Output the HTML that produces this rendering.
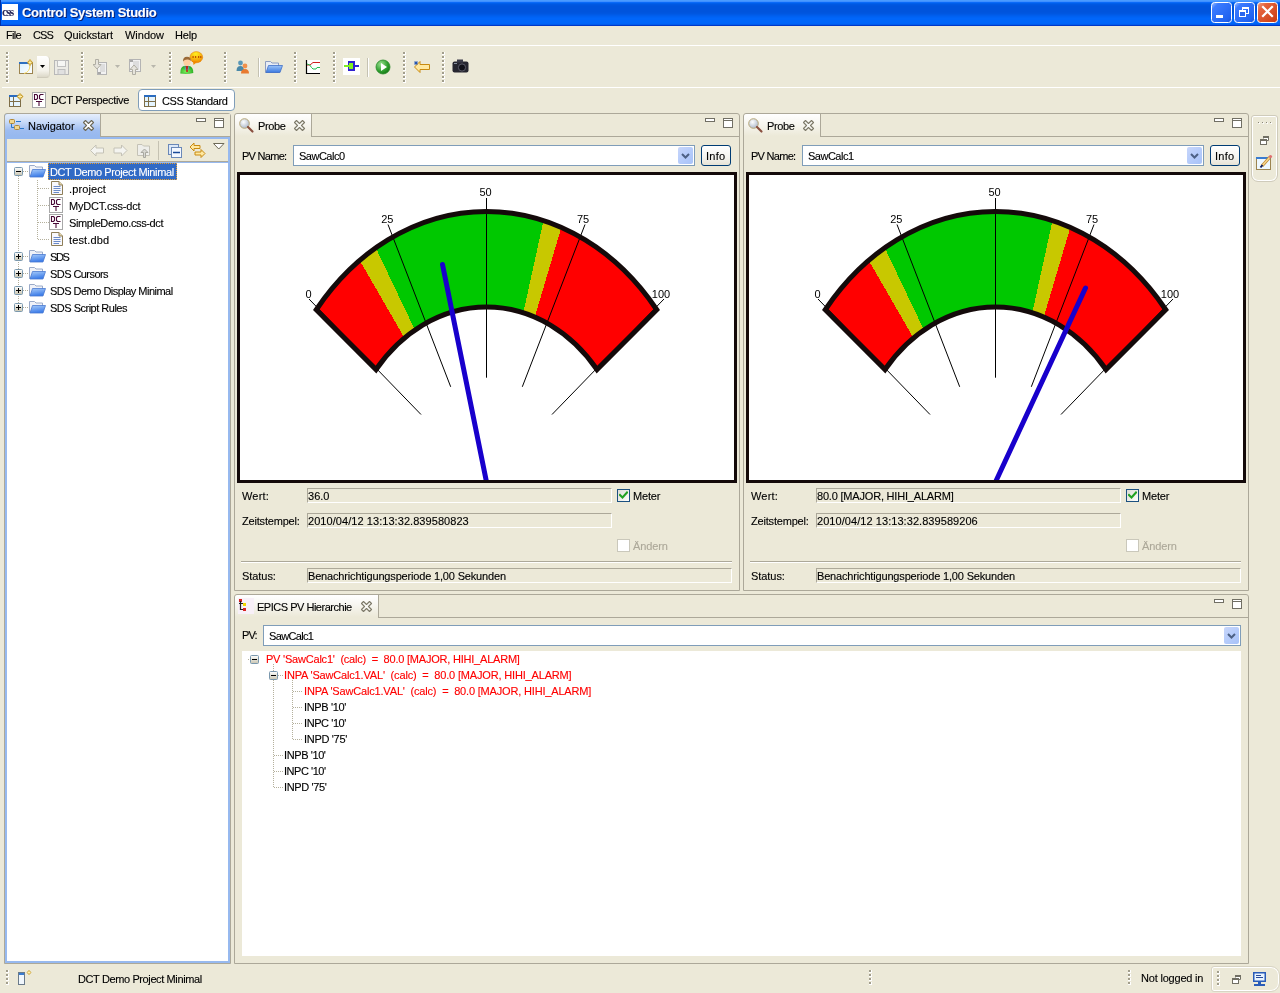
<!DOCTYPE html>
<html><head><meta charset="utf-8"><style>*{box-sizing:border-box;margin:0;padding:0}
html,body{width:1280px;height:993px;overflow:hidden;background:#ECE9D8;font-family:"Liberation Sans",sans-serif;font-size:11px;color:#000}
.a{position:absolute;display:block}
.t{position:absolute;white-space:pre;-webkit-text-stroke:0.12px currentColor}
</style></head><body><div id="root" style="position:absolute;left:0;top:0;width:1280px;height:993px;will-change:transform">
<div class="a" style="left:0px;top:0px;width:1280px;height:26px;background:linear-gradient(#4A9BFF 0px,#4A9BFF 1px,#3F90FF 1px,#3F90FF 2px,#0A6AF8 2px,#0A6AF8 3px,#005FEA 3px,#005FEA 4px,#0058E2 4px,#0058E2 5px,#0056DE 5px,#0056DE 6px,#0054DC 6px,#0054DC 7px,#0054DC 7px,#0054DC 8px,#0054DC 8px,#0054DC 9px,#0054DC 9px,#0054DC 10px,#0054DC 10px,#0054DC 11px,#0054DC 11px,#0054DC 12px,#0055DE 12px,#0055DE 13px,#0057E0 13px,#0057E0 14px,#005AE6 14px,#005AE6 15px,#005EEC 15px,#005EEC 16px,#0061F2 16px,#0061F2 17px,#0064F6 17px,#0064F6 18px,#0066FA 18px,#0066FA 19px,#0066FA 19px,#0066FA 20px,#0066FA 20px,#0066FA 21px,#0066FA 21px,#0066FA 22px,#0066FA 22px,#0066FA 23px,#0064F8 23px,#0064F8 24px,#005CEC 24px,#005CEC 25px,#0038C8 25px,#0038C8 26px)"></div>
<div class="a" style="left:0px;top:0px;width:1px;height:26px;background:#0031A8"></div>
<div class="a" style="left:2px;top:4px;width:16px;height:16px;background:#fff"></div>
<div class="t" style="left:2px;top:5px;font:bold 12px/14px 'Liberation Serif';color:#2a2a5a;letter-spacing:-1.2px;-webkit-text-stroke:0">css</div>
<div class="t" style="left:23px;top:7px;font-size:13px;line-height:13px;color:#0A1E6E;font-weight:bold;letter-spacing:-0.267px">Control System Studio</div>
<div class="t" style="left:22px;top:6px;font-size:13px;line-height:13px;color:#fff;font-weight:bold;letter-spacing:-0.267px">Control System Studio</div>
<svg class="a" style="left:1211px;top:2px;" width="21" height="21" viewBox="0 0 21 21"><defs><linearGradient id="gbmin" x1="0" y1="0" x2="1" y2="1"><stop offset="0" stop-color="#A9C5FF"/><stop offset="0.2" stop-color="#3B7BFF"/><stop offset="0.8" stop-color="#2163F0"/><stop offset="1" stop-color="#1A52D8"/></linearGradient></defs><rect x="0.5" y="0.5" width="20" height="20" rx="3" ry="3" fill="url(#gbmin)" stroke="#fff" stroke-width="1"/><rect x="5" y="13" width="7" height="3" fill="#fff"/></svg>
<svg class="a" style="left:1234px;top:2px;" width="21" height="21" viewBox="0 0 21 21"><defs><linearGradient id="gbmax" x1="0" y1="0" x2="1" y2="1"><stop offset="0" stop-color="#A9C5FF"/><stop offset="0.2" stop-color="#3B7BFF"/><stop offset="0.8" stop-color="#2163F0"/><stop offset="1" stop-color="#1A52D8"/></linearGradient></defs><rect x="0.5" y="0.5" width="20" height="20" rx="3" ry="3" fill="url(#gbmax)" stroke="#fff" stroke-width="1"/><rect x="8.5" y="5.5" width="6" height="6" fill="none" stroke="#fff" stroke-width="1"/><rect x="8" y="5" width="7" height="2" fill="#fff"/><rect x="5.5" y="8.5" width="6" height="6" fill="#2A66EE" stroke="#fff" stroke-width="1"/><rect x="5" y="8" width="7" height="2" fill="#fff"/></svg>
<svg class="a" style="left:1257px;top:2px;" width="21" height="21" viewBox="0 0 21 21"><defs><linearGradient id="gc" x1="0" y1="0" x2="1" y2="1"><stop offset="0" stop-color="#F2A48A"/><stop offset="0.25" stop-color="#E5643C"/><stop offset="1" stop-color="#C93A10"/></linearGradient></defs><rect x="0.5" y="0.5" width="20" height="20" rx="3" ry="3" fill="url(#gc)" stroke="#fff" stroke-width="1"/><path d="M6,5 L15,14 M15,5 L6,14" stroke="#fff" stroke-width="2.2" stroke-linecap="square"/></svg>
<div class="t" style="left:6px;top:30px;font-size:11px;line-height:11px;letter-spacing:-0.680px">File</div>
<div class="t" style="left:33px;top:30px;font-size:11px;line-height:11px;letter-spacing:-0.875px">CSS</div>
<div class="t" style="left:64px;top:30px;font-size:11px;line-height:11px;letter-spacing:-0.053px">Quickstart</div>
<div class="t" style="left:125px;top:30px;font-size:11px;line-height:11px;letter-spacing:-0.021px">Window</div>
<div class="t" style="left:175px;top:30px;font-size:11px;line-height:11px;letter-spacing:-0.156px">Help</div>
<div class="a" style="left:0px;top:45px;width:1280px;height:1px;background:#fff"></div>
<div class="a" style="left:2px;top:87px;width:1278px;height:1px;background:#fff"></div>
<svg class="a" style="left:6px;top:52px;" width="3" height="32" viewBox="0 0 3 32"><rect x="0" y="0" width="2" height="2" fill="#A29E8C"/><rect x="2" y="0" width="1" height="3" fill="#fff"/><rect x="0" y="2" width="3" height="1" fill="#fff"/><rect x="0" y="4" width="2" height="2" fill="#A29E8C"/><rect x="2" y="4" width="1" height="3" fill="#fff"/><rect x="0" y="6" width="3" height="1" fill="#fff"/><rect x="0" y="8" width="2" height="2" fill="#A29E8C"/><rect x="2" y="8" width="1" height="3" fill="#fff"/><rect x="0" y="10" width="3" height="1" fill="#fff"/><rect x="0" y="12" width="2" height="2" fill="#A29E8C"/><rect x="2" y="12" width="1" height="3" fill="#fff"/><rect x="0" y="14" width="3" height="1" fill="#fff"/><rect x="0" y="16" width="2" height="2" fill="#A29E8C"/><rect x="2" y="16" width="1" height="3" fill="#fff"/><rect x="0" y="18" width="3" height="1" fill="#fff"/><rect x="0" y="20" width="2" height="2" fill="#A29E8C"/><rect x="2" y="20" width="1" height="3" fill="#fff"/><rect x="0" y="22" width="3" height="1" fill="#fff"/><rect x="0" y="24" width="2" height="2" fill="#A29E8C"/><rect x="2" y="24" width="1" height="3" fill="#fff"/><rect x="0" y="26" width="3" height="1" fill="#fff"/><rect x="0" y="28" width="2" height="2" fill="#A29E8C"/><rect x="2" y="28" width="1" height="3" fill="#fff"/><rect x="0" y="30" width="3" height="1" fill="#fff"/></svg>
<svg class="a" style="left:81px;top:52px;" width="3" height="32" viewBox="0 0 3 32"><rect x="0" y="0" width="2" height="2" fill="#A29E8C"/><rect x="2" y="0" width="1" height="3" fill="#fff"/><rect x="0" y="2" width="3" height="1" fill="#fff"/><rect x="0" y="4" width="2" height="2" fill="#A29E8C"/><rect x="2" y="4" width="1" height="3" fill="#fff"/><rect x="0" y="6" width="3" height="1" fill="#fff"/><rect x="0" y="8" width="2" height="2" fill="#A29E8C"/><rect x="2" y="8" width="1" height="3" fill="#fff"/><rect x="0" y="10" width="3" height="1" fill="#fff"/><rect x="0" y="12" width="2" height="2" fill="#A29E8C"/><rect x="2" y="12" width="1" height="3" fill="#fff"/><rect x="0" y="14" width="3" height="1" fill="#fff"/><rect x="0" y="16" width="2" height="2" fill="#A29E8C"/><rect x="2" y="16" width="1" height="3" fill="#fff"/><rect x="0" y="18" width="3" height="1" fill="#fff"/><rect x="0" y="20" width="2" height="2" fill="#A29E8C"/><rect x="2" y="20" width="1" height="3" fill="#fff"/><rect x="0" y="22" width="3" height="1" fill="#fff"/><rect x="0" y="24" width="2" height="2" fill="#A29E8C"/><rect x="2" y="24" width="1" height="3" fill="#fff"/><rect x="0" y="26" width="3" height="1" fill="#fff"/><rect x="0" y="28" width="2" height="2" fill="#A29E8C"/><rect x="2" y="28" width="1" height="3" fill="#fff"/><rect x="0" y="30" width="3" height="1" fill="#fff"/></svg>
<svg class="a" style="left:169px;top:52px;" width="3" height="32" viewBox="0 0 3 32"><rect x="0" y="0" width="2" height="2" fill="#A29E8C"/><rect x="2" y="0" width="1" height="3" fill="#fff"/><rect x="0" y="2" width="3" height="1" fill="#fff"/><rect x="0" y="4" width="2" height="2" fill="#A29E8C"/><rect x="2" y="4" width="1" height="3" fill="#fff"/><rect x="0" y="6" width="3" height="1" fill="#fff"/><rect x="0" y="8" width="2" height="2" fill="#A29E8C"/><rect x="2" y="8" width="1" height="3" fill="#fff"/><rect x="0" y="10" width="3" height="1" fill="#fff"/><rect x="0" y="12" width="2" height="2" fill="#A29E8C"/><rect x="2" y="12" width="1" height="3" fill="#fff"/><rect x="0" y="14" width="3" height="1" fill="#fff"/><rect x="0" y="16" width="2" height="2" fill="#A29E8C"/><rect x="2" y="16" width="1" height="3" fill="#fff"/><rect x="0" y="18" width="3" height="1" fill="#fff"/><rect x="0" y="20" width="2" height="2" fill="#A29E8C"/><rect x="2" y="20" width="1" height="3" fill="#fff"/><rect x="0" y="22" width="3" height="1" fill="#fff"/><rect x="0" y="24" width="2" height="2" fill="#A29E8C"/><rect x="2" y="24" width="1" height="3" fill="#fff"/><rect x="0" y="26" width="3" height="1" fill="#fff"/><rect x="0" y="28" width="2" height="2" fill="#A29E8C"/><rect x="2" y="28" width="1" height="3" fill="#fff"/><rect x="0" y="30" width="3" height="1" fill="#fff"/></svg>
<svg class="a" style="left:224px;top:52px;" width="3" height="32" viewBox="0 0 3 32"><rect x="0" y="0" width="2" height="2" fill="#A29E8C"/><rect x="2" y="0" width="1" height="3" fill="#fff"/><rect x="0" y="2" width="3" height="1" fill="#fff"/><rect x="0" y="4" width="2" height="2" fill="#A29E8C"/><rect x="2" y="4" width="1" height="3" fill="#fff"/><rect x="0" y="6" width="3" height="1" fill="#fff"/><rect x="0" y="8" width="2" height="2" fill="#A29E8C"/><rect x="2" y="8" width="1" height="3" fill="#fff"/><rect x="0" y="10" width="3" height="1" fill="#fff"/><rect x="0" y="12" width="2" height="2" fill="#A29E8C"/><rect x="2" y="12" width="1" height="3" fill="#fff"/><rect x="0" y="14" width="3" height="1" fill="#fff"/><rect x="0" y="16" width="2" height="2" fill="#A29E8C"/><rect x="2" y="16" width="1" height="3" fill="#fff"/><rect x="0" y="18" width="3" height="1" fill="#fff"/><rect x="0" y="20" width="2" height="2" fill="#A29E8C"/><rect x="2" y="20" width="1" height="3" fill="#fff"/><rect x="0" y="22" width="3" height="1" fill="#fff"/><rect x="0" y="24" width="2" height="2" fill="#A29E8C"/><rect x="2" y="24" width="1" height="3" fill="#fff"/><rect x="0" y="26" width="3" height="1" fill="#fff"/><rect x="0" y="28" width="2" height="2" fill="#A29E8C"/><rect x="2" y="28" width="1" height="3" fill="#fff"/><rect x="0" y="30" width="3" height="1" fill="#fff"/></svg>
<svg class="a" style="left:294px;top:52px;" width="3" height="32" viewBox="0 0 3 32"><rect x="0" y="0" width="2" height="2" fill="#A29E8C"/><rect x="2" y="0" width="1" height="3" fill="#fff"/><rect x="0" y="2" width="3" height="1" fill="#fff"/><rect x="0" y="4" width="2" height="2" fill="#A29E8C"/><rect x="2" y="4" width="1" height="3" fill="#fff"/><rect x="0" y="6" width="3" height="1" fill="#fff"/><rect x="0" y="8" width="2" height="2" fill="#A29E8C"/><rect x="2" y="8" width="1" height="3" fill="#fff"/><rect x="0" y="10" width="3" height="1" fill="#fff"/><rect x="0" y="12" width="2" height="2" fill="#A29E8C"/><rect x="2" y="12" width="1" height="3" fill="#fff"/><rect x="0" y="14" width="3" height="1" fill="#fff"/><rect x="0" y="16" width="2" height="2" fill="#A29E8C"/><rect x="2" y="16" width="1" height="3" fill="#fff"/><rect x="0" y="18" width="3" height="1" fill="#fff"/><rect x="0" y="20" width="2" height="2" fill="#A29E8C"/><rect x="2" y="20" width="1" height="3" fill="#fff"/><rect x="0" y="22" width="3" height="1" fill="#fff"/><rect x="0" y="24" width="2" height="2" fill="#A29E8C"/><rect x="2" y="24" width="1" height="3" fill="#fff"/><rect x="0" y="26" width="3" height="1" fill="#fff"/><rect x="0" y="28" width="2" height="2" fill="#A29E8C"/><rect x="2" y="28" width="1" height="3" fill="#fff"/><rect x="0" y="30" width="3" height="1" fill="#fff"/></svg>
<svg class="a" style="left:333px;top:52px;" width="3" height="32" viewBox="0 0 3 32"><rect x="0" y="0" width="2" height="2" fill="#A29E8C"/><rect x="2" y="0" width="1" height="3" fill="#fff"/><rect x="0" y="2" width="3" height="1" fill="#fff"/><rect x="0" y="4" width="2" height="2" fill="#A29E8C"/><rect x="2" y="4" width="1" height="3" fill="#fff"/><rect x="0" y="6" width="3" height="1" fill="#fff"/><rect x="0" y="8" width="2" height="2" fill="#A29E8C"/><rect x="2" y="8" width="1" height="3" fill="#fff"/><rect x="0" y="10" width="3" height="1" fill="#fff"/><rect x="0" y="12" width="2" height="2" fill="#A29E8C"/><rect x="2" y="12" width="1" height="3" fill="#fff"/><rect x="0" y="14" width="3" height="1" fill="#fff"/><rect x="0" y="16" width="2" height="2" fill="#A29E8C"/><rect x="2" y="16" width="1" height="3" fill="#fff"/><rect x="0" y="18" width="3" height="1" fill="#fff"/><rect x="0" y="20" width="2" height="2" fill="#A29E8C"/><rect x="2" y="20" width="1" height="3" fill="#fff"/><rect x="0" y="22" width="3" height="1" fill="#fff"/><rect x="0" y="24" width="2" height="2" fill="#A29E8C"/><rect x="2" y="24" width="1" height="3" fill="#fff"/><rect x="0" y="26" width="3" height="1" fill="#fff"/><rect x="0" y="28" width="2" height="2" fill="#A29E8C"/><rect x="2" y="28" width="1" height="3" fill="#fff"/><rect x="0" y="30" width="3" height="1" fill="#fff"/></svg>
<svg class="a" style="left:403px;top:52px;" width="3" height="32" viewBox="0 0 3 32"><rect x="0" y="0" width="2" height="2" fill="#A29E8C"/><rect x="2" y="0" width="1" height="3" fill="#fff"/><rect x="0" y="2" width="3" height="1" fill="#fff"/><rect x="0" y="4" width="2" height="2" fill="#A29E8C"/><rect x="2" y="4" width="1" height="3" fill="#fff"/><rect x="0" y="6" width="3" height="1" fill="#fff"/><rect x="0" y="8" width="2" height="2" fill="#A29E8C"/><rect x="2" y="8" width="1" height="3" fill="#fff"/><rect x="0" y="10" width="3" height="1" fill="#fff"/><rect x="0" y="12" width="2" height="2" fill="#A29E8C"/><rect x="2" y="12" width="1" height="3" fill="#fff"/><rect x="0" y="14" width="3" height="1" fill="#fff"/><rect x="0" y="16" width="2" height="2" fill="#A29E8C"/><rect x="2" y="16" width="1" height="3" fill="#fff"/><rect x="0" y="18" width="3" height="1" fill="#fff"/><rect x="0" y="20" width="2" height="2" fill="#A29E8C"/><rect x="2" y="20" width="1" height="3" fill="#fff"/><rect x="0" y="22" width="3" height="1" fill="#fff"/><rect x="0" y="24" width="2" height="2" fill="#A29E8C"/><rect x="2" y="24" width="1" height="3" fill="#fff"/><rect x="0" y="26" width="3" height="1" fill="#fff"/><rect x="0" y="28" width="2" height="2" fill="#A29E8C"/><rect x="2" y="28" width="1" height="3" fill="#fff"/><rect x="0" y="30" width="3" height="1" fill="#fff"/></svg>
<svg class="a" style="left:442px;top:52px;" width="3" height="32" viewBox="0 0 3 32"><rect x="0" y="0" width="2" height="2" fill="#A29E8C"/><rect x="2" y="0" width="1" height="3" fill="#fff"/><rect x="0" y="2" width="3" height="1" fill="#fff"/><rect x="0" y="4" width="2" height="2" fill="#A29E8C"/><rect x="2" y="4" width="1" height="3" fill="#fff"/><rect x="0" y="6" width="3" height="1" fill="#fff"/><rect x="0" y="8" width="2" height="2" fill="#A29E8C"/><rect x="2" y="8" width="1" height="3" fill="#fff"/><rect x="0" y="10" width="3" height="1" fill="#fff"/><rect x="0" y="12" width="2" height="2" fill="#A29E8C"/><rect x="2" y="12" width="1" height="3" fill="#fff"/><rect x="0" y="14" width="3" height="1" fill="#fff"/><rect x="0" y="16" width="2" height="2" fill="#A29E8C"/><rect x="2" y="16" width="1" height="3" fill="#fff"/><rect x="0" y="18" width="3" height="1" fill="#fff"/><rect x="0" y="20" width="2" height="2" fill="#A29E8C"/><rect x="2" y="20" width="1" height="3" fill="#fff"/><rect x="0" y="22" width="3" height="1" fill="#fff"/><rect x="0" y="24" width="2" height="2" fill="#A29E8C"/><rect x="2" y="24" width="1" height="3" fill="#fff"/><rect x="0" y="26" width="3" height="1" fill="#fff"/><rect x="0" y="28" width="2" height="2" fill="#A29E8C"/><rect x="2" y="28" width="1" height="3" fill="#fff"/><rect x="0" y="30" width="3" height="1" fill="#fff"/></svg>
<div class="a" style="left:258px;top:58px;width:1px;height:19px;background:#C5C2B2"></div>
<div class="a" style="left:259px;top:58px;width:1px;height:19px;background:#fff"></div>
<div class="a" style="left:367px;top:58px;width:1px;height:19px;background:#C5C2B2"></div>
<div class="a" style="left:368px;top:58px;width:1px;height:19px;background:#fff"></div>
<svg class="a" style="left:19px;top:59px;" width="16" height="16" viewBox="0 0 16 16"><defs><linearGradient id="nw" x1="0" y1="0" x2="1" y2="1"><stop offset="0" stop-color="#D8F0FF"/><stop offset="1" stop-color="#FFFFFF"/></linearGradient></defs><rect x="0.5" y="3.5" width="13" height="11" fill="url(#nw)" stroke="#9C8450"/><rect x="0" y="3" width="10" height="2" fill="#2C6FC0"/><path d="M5,14.5 Q11,13 11,6" stroke="#F8D860" stroke-width="1" fill="none"/><path d="M11,0 L14,3.5 L11,7 L8,3.5 Z" fill="#C9A030"/><path d="M11,1.5 V5.5 M9.5,3.5 H12.5" stroke="#FFF0B0" stroke-width="1"/></svg>
<div class="a" style="left:37px;top:56px;width:13px;height:22px;border-radius:0 4px 4px 0;background:linear-gradient(#FFFFFF,#F4F2EA 70%,#DCD8C8);border-right:1px solid #D9D6C6;border-bottom:1px solid #CFCBBB"></div>
<svg class="a" style="left:40px;top:65px;" width="6" height="4" viewBox="0 0 6 4"><path d="M0,0 H5 L2.5,3 Z" fill="#000"/></svg>
<svg class="a" style="left:54px;top:60px;" width="16" height="16" viewBox="0 0 16 16"><rect x="0.5" y="0.5" width="14" height="14" fill="#ECEBE6" stroke="#B8B8B8"/><rect x="3.5" y="0.5" width="8" height="6" fill="#F6F6F4" stroke="#C0C0C0"/><rect x="4" y="9.5" width="7" height="5" fill="#E0E0E0" stroke="#BDBDBD"/></svg>
<svg class="a" style="left:93px;top:59px;" width="16" height="17" viewBox="0 0 16 17"><rect x="4.5" y="3.5" width="9" height="12" fill="#F2F2F2" stroke="#B4B4B4"/><path d="M7,6 H12 M7,8 H12 M7,10 H12 M7,12 H12" stroke="#C8C8C8"/><rect x="5" y="13" width="3" height="2" fill="#A8A8A8"/><path d="M2.5,0.5 H5.5 V5.5 H8 L4,10 L0,5.5 H2.5 Z" fill="#E6E4DC" stroke="#B0AEA4"/></svg>
<svg class="a" style="left:115px;top:65px;" width="6" height="4" viewBox="0 0 6 4"><path d="M0,0 H5 L2.5,3 Z" fill="#B8B6AC"/></svg>
<svg class="a" style="left:128px;top:58px;" width="16" height="18" viewBox="0 0 16 18"><rect x="1.5" y="1.5" width="11" height="12" fill="#F2F2F2" stroke="#B4B4B4"/><path d="M5,4 H11 M5,6 H11 M5,8 H11 M8,10 H11" stroke="#C8C8C8"/><rect x="2" y="2" width="3" height="2" fill="#A8A8A8"/><path d="M4.5,16.5 H7.5 V11.5 H10 L6,7 L2,11.5 H4.5 Z" fill="#E6E4DC" stroke="#B0AEA4"/></svg>
<svg class="a" style="left:151px;top:65px;" width="6" height="4" viewBox="0 0 6 4"><path d="M0,0 H5 L2.5,3 Z" fill="#B8B6AC"/></svg>
<svg class="a" style="left:180px;top:51px;" width="24" height="24" viewBox="0 0 24 24"><defs><radialGradient id="pb" cx="0.45" cy="0.2" r="0.8"><stop offset="0" stop-color="#FFF020"/><stop offset="1" stop-color="#F08A00"/></radialGradient><radialGradient id="sh" cx="0.45" cy="0.7" r="0.7"><stop offset="0" stop-color="#80F060"/><stop offset="1" stop-color="#18A018"/></radialGradient></defs><ellipse cx="16.3" cy="6.2" rx="6.4" ry="5.6" fill="url(#pb)" stroke="#E07800" stroke-width="0.5"/><path d="M13,10 L13.5,14 L17.5,10.5 Z" fill="#F08A00"/><path d="M12.5,5 h1.2 v2 h-1.2z M15,5 h1.2 v2 h-1.2z M18,5 h1.2 v2 h-1.2z M20.2,5 h1.2 v2 h-1.2z" fill="#C05000"/><path d="M0.3,22.5 Q0,15.5 5,14.8 H8.5 Q13.5,15.5 13.3,22 Q7,23.5 0.3,22.5 Z" fill="url(#sh)"/><path d="M5.8,15 L6.3,21 L7.8,21 L8,15 Z" fill="#C02020"/><path d="M4.8,15 L5.8,19 M9,15 L8,19" stroke="#7090D0" stroke-width="0.8"/><ellipse cx="7" cy="10.8" rx="3.6" ry="4.2" fill="#FFCFA0"/><path d="M3,10.5 Q2.8,5.8 7,5.8 Q11,5.8 10.8,10 Q9.5,8 7,8.5 Q4.5,8.5 3,10.5 Z" fill="#9A6A38"/></svg>
<svg class="a" style="left:236px;top:60px;" width="14" height="14" viewBox="0 0 14 14"><circle cx="4.5" cy="3" r="2.4" fill="#5A98B8"/><path d="M0.5,11 Q0.5,6 4.5,6 Q8,6 8,11 Z" fill="#4A88A8"/><circle cx="9" cy="6" r="2.4" fill="#F0904A"/><path d="M5,13.5 Q5,9 9,9 Q13,9 13,13.5 Z" fill="#E87A30"/></svg>
<svg class="a" style="left:265px;top:59px;" width="18" height="15" viewBox="0 0 18 15"><defs><linearGradient id="fo" x1="0" y1="0" x2="0" y2="1"><stop offset="0" stop-color="#9CC4F8"/><stop offset="1" stop-color="#3A78E0"/></linearGradient></defs><path d="M0.5,13.5 V2.5 H5.5 L7,4 H13.5 V13.5 Z" fill="#E8ECF4" stroke="#8C9CC0"/><path d="M1,13.5 L3.5,6.5 H17.5 L15,13.5 Z" fill="url(#fo)" stroke="#4070C8" stroke-width="0.8"/></svg>
<svg class="a" style="left:305px;top:59px;" width="16" height="16" viewBox="0 0 16 16"><rect x="1" y="1" width="14" height="13" fill="#fff"/><path d="M1.5,1 V14.5 H15" stroke="#000" stroke-width="1.2" fill="none"/><path d="M2,6 H5 L8,3.5 H15" stroke="#D02020" fill="none"/><path d="M2,5 Q5,5 6.5,8.5 L8,10 H11 L12,8.5 H15" stroke="#20C050" fill="none"/></svg>
<svg class="a" style="left:343px;top:58px;" width="17" height="17" viewBox="0 0 17 17"><rect x="0" y="0" width="17" height="17" fill="#fff"/><rect x="5" y="3" width="7" height="10" fill="#3020D0"/><rect x="6" y="5" width="4" height="6" fill="#80F020"/><rect x="1" y="7" width="6" height="2" fill="#80F020"/><rect x="12" y="7" width="4" height="2" fill="#3020D0"/></svg>
<svg class="a" style="left:375px;top:59px;" width="16" height="16" viewBox="0 0 16 16"><defs><radialGradient id="pl" cx="0.35" cy="0.3" r="0.8"><stop offset="0" stop-color="#9AE090"/><stop offset="0.6" stop-color="#30A030"/><stop offset="1" stop-color="#107010"/></radialGradient></defs><circle cx="8" cy="8" r="7" fill="url(#pl)" stroke="#2A8A2A" stroke-width="0.8"/><path d="M6,4 L12,8 L6,12 Z" fill="#fff"/></svg>
<svg class="a" style="left:413px;top:59px;" width="18" height="15" viewBox="0 0 18 15"><path d="M1.5,8 L7,2.5 V5.5 H16.5 V10.5 H7 V13.5 Z" fill="#FFE8A0" stroke="#C88A10" stroke-width="1"/><path d="M3,2 L3,6 M1,4 H5 M1.6,2.6 L4.4,5.4 M4.4,2.6 L1.6,5.4" stroke="#2050B0" stroke-width="0.9"/></svg>
<svg class="a" style="left:452px;top:59px;" width="18" height="15" viewBox="0 0 18 15"><rect x="0.5" y="2.5" width="16" height="11" rx="2" fill="#262630"/><rect x="5" y="0.5" width="6" height="3" fill="#3A3A48"/><circle cx="10" cy="8.5" r="3.6" fill="#101018" stroke="#6A6A78" stroke-width="0.8"/><rect x="2" y="4" width="3" height="1" fill="#8890A0"/></svg>
<svg class="a" style="left:9px;top:93px;" width="15" height="15" viewBox="0 0 15 15"><rect x="0.5" y="2.5" width="11" height="11" fill="#E4F4FF" stroke="#7E6E48"/><rect x="0" y="2" width="9" height="2" fill="#2A6CC0"/><path d="M4.5,4 V13 M1,8.5 H11" stroke="#7E6E48"/><path d="M11,0 L14.5,3.5 L11,7 L7.5,3.5 Z" fill="#C9A030"/><path d="M11,1.5 V5.5 M9,3.5 H13" stroke="#FFF0B0"/></svg>
<svg class="a" style="left:32px;top:92px;" width="14" height="16" viewBox="0 0 14 16"><rect x="0.5" y="0.5" width="13" height="15" fill="#fff" stroke="#A8A8A8"/><path d="M2.5,2.5 V7.5 H4.5 L5.5,6.5 V3.5 L4.5,2.5 Z M11.5,2.5 H8.5 L7.5,3.5 V6.5 L8.5,7.5 H11.5 M4,9.5 H10 M7,9.5 V14" stroke="#4A0A38" stroke-width="1.1" fill="none"/></svg>
<div class="t" style="left:51px;top:95px;font-size:11px;line-height:11px;letter-spacing:-0.330px">DCT Perspective</div>
<div class="a" style="left:138px;top:89px;width:97px;height:22px;border:1px solid #7F9DB9;border-radius:4px;background:#fff"></div>
<svg class="a" style="left:144px;top:95px;" width="13" height="12" viewBox="0 0 13 12"><rect x="0.5" y="0.5" width="11" height="11" fill="#E4F4FF" stroke="#7E6E48"/><rect x="0" y="0" width="12" height="2" fill="#2A6CC0"/><path d="M4.5,2 V11 M1,6.5 H11" stroke="#7E6E48"/></svg>
<div class="t" style="left:162px;top:96px;font-size:11px;line-height:11px;letter-spacing:-0.406px">CSS Standard</div>
<div class="a" style="left:4px;top:113px;width:227px;height:851px;border:1px solid #ACA899;border-radius:3px 3px 0 0;background:#97B9EF"></div>
<div class="a" style="left:5px;top:114px;width:95px;height:22px;border-radius:3px 0 0 0;background:linear-gradient(#E6EFFC 0%,#C9DBF8 35%,#9DBCF0 75%,#97B9EF 100%)"></div>
<div class="a" style="left:100px;top:114px;width:130px;height:23px;background:#ECE9D8;border-left:1px solid #ACA899;border-bottom:1px solid #ACA899"></div>
<svg class="a" style="left:9px;top:119px;" width="16" height="12" viewBox="0 0 16 12"><rect x="0.5" y="0.5" width="5" height="4" rx="1" fill="#F0D890" stroke="#B08838"/><rect x="5.5" y="6.5" width="5" height="4" rx="1" fill="#F0D890" stroke="#B08838"/><path d="M2.5,5 V8.5 H5 M7,2.5 H12 M11,9.5 H15" stroke="#2A78C8" fill="none"/></svg>
<div class="t" style="left:28px;top:121px;font-size:11px;line-height:11px;letter-spacing:-0.066px">Navigator</div>
<svg class="a" style="left:83px;top:120px;" width="12" height="12" viewBox="0 0 12 12"><path d="M0.5,2.5 L2.5,0.5 L5.5,3.5 L8.5,0.5 L10.5,2.5 L7.5,5.5 L10.5,8.5 L8.5,10.5 L5.5,7.5 L2.5,10.5 L0.5,8.5 L3.5,5.5 Z" fill="#fff" stroke="#6E6A58" stroke-width="1.1" stroke-linejoin="round"/></svg>
<div class="a" style="left:196px;top:118px;width:10px;height:4px;border:1px solid #716F64;background:#fff"></div>
<div class="a" style="left:214px;top:118px;width:10px;height:10px;border:1px solid #716F64;background:#fff"></div>
<div class="a" style="left:215px;top:120px;width:8px;height:1px;background:#716F64"></div>
<div class="a" style="left:7px;top:139px;width:221px;height:23px;background:#ECE9D8;border-bottom:1px solid #ACA899"></div>
<svg class="a" style="left:90px;top:144px;" width="15" height="13" viewBox="0 0 15 13"><path d="M0.5,6.5 L6,1 V4 H13.5 V9 H6 V12 Z" fill="#F4F4F0" stroke="#C4C2B6"/></svg>
<svg class="a" style="left:113px;top:144px;" width="15" height="13" viewBox="0 0 15 13"><path d="M14,6.5 L8.5,1 V4 H1 V9 H8.5 V12 Z" fill="#F4F4F0" stroke="#C4C2B6"/></svg>
<svg class="a" style="left:137px;top:143px;" width="14" height="16" viewBox="0 0 14 16"><path d="M0.5,12.5 V1.5 H5 L6.5,3 H12.5 V12.5 Z" fill="#EEEEEA" stroke="#C4C2B6"/><path d="M6.5,14.5 V9.5 H4 L7.5,6 L11,9.5 H8.5 V14.5 Z" fill="#D8D8D2" stroke="#A8A8A0"/></svg>
<div class="a" style="left:158px;top:141px;width:1px;height:19px;background:#C5C2B2"></div>
<svg class="a" style="left:168px;top:144px;" width="14" height="14" viewBox="0 0 14 14"><rect x="0.5" y="0.5" width="10" height="10" fill="#DCE8F8" stroke="#6A88B8"/><rect x="3.5" y="3.5" width="10" height="10" fill="#F4F8FF" stroke="#6A88B8"/><path d="M5,8.5 H12" stroke="#1A4A98" stroke-width="1.5"/></svg>
<svg class="a" style="left:189px;top:142px;" width="17" height="17" viewBox="0 0 17 17"><path d="M1,5 L5,1 V3.5 H11 V6.5 H5 V9 Z" fill="#FFE8A0" stroke="#C88A10"/><path d="M16,11.5 L12,7.5 V10 H6 V13 H12 V15.5 Z" fill="#FFE8A0" stroke="#C88A10"/></svg>
<svg class="a" style="left:213px;top:143px;" width="12" height="7" viewBox="0 0 12 7"><path d="M0.5,0.5 H11 L5.75,6 Z" fill="#fff" stroke="#6E6A58"/></svg>
<div class="a" style="left:7px;top:163px;width:221px;height:798px;background:#fff"></div>
<div class="a" style="left:18px;top:176px;width:1px;height:132px;background-image:linear-gradient(#B4B09C 1px,transparent 1px);background-size:1px 2px"></div>
<div class="a" style="left:37px;top:180px;width:1px;height:60px;background-image:linear-gradient(#B4B09C 1px,transparent 1px);background-size:1px 2px"></div>
<div class="a" style="left:38px;top:188px;width:11px;height:1px;background-image:linear-gradient(90deg,#B4B09C 1px,transparent 1px);background-size:2px 1px"></div>
<div class="a" style="left:38px;top:205px;width:11px;height:1px;background-image:linear-gradient(90deg,#B4B09C 1px,transparent 1px);background-size:2px 1px"></div>
<div class="a" style="left:38px;top:222px;width:11px;height:1px;background-image:linear-gradient(90deg,#B4B09C 1px,transparent 1px);background-size:2px 1px"></div>
<div class="a" style="left:38px;top:239px;width:11px;height:1px;background-image:linear-gradient(90deg,#B4B09C 1px,transparent 1px);background-size:2px 1px"></div>
<div class="a" style="left:23px;top:171px;width:6px;height:1px;background-image:linear-gradient(90deg,#B4B09C 1px,transparent 1px);background-size:2px 1px"></div>
<div class="a" style="left:23px;top:256px;width:6px;height:1px;background-image:linear-gradient(90deg,#B4B09C 1px,transparent 1px);background-size:2px 1px"></div>
<div class="a" style="left:23px;top:273px;width:6px;height:1px;background-image:linear-gradient(90deg,#B4B09C 1px,transparent 1px);background-size:2px 1px"></div>
<div class="a" style="left:23px;top:290px;width:6px;height:1px;background-image:linear-gradient(90deg,#B4B09C 1px,transparent 1px);background-size:2px 1px"></div>
<div class="a" style="left:23px;top:307px;width:6px;height:1px;background-image:linear-gradient(90deg,#B4B09C 1px,transparent 1px);background-size:2px 1px"></div>
<div class="a" style="left:48px;top:163px;width:129px;height:17px;background:#316AC5;outline:1px dotted #E8A030;outline-offset:-1px"></div>
<div class="t" style="left:50px;top:167px;font-size:11px;line-height:11px;color:#fff;letter-spacing:-0.389px">DCT Demo Project Minimal</div>
<svg class="a" style="left:14px;top:167px;" width="9" height="9" viewBox="0 0 9 9"><defs><linearGradient id="eb14167" x1="0" y1="0" x2="0" y2="1"><stop offset="0" stop-color="#fff"/><stop offset="1" stop-color="#C8C4B0"/></linearGradient></defs><rect x="0.5" y="0.5" width="8" height="8" rx="1" fill="url(#eb14167)" stroke="#7A98AE"/><path d="M2,4.5 H7" stroke="#000"/></svg>
<svg class="a" style="left:29px;top:164px;" width="17" height="14" viewBox="0 0 17 14"><defs><linearGradient id="fl" x1="0" y1="0" x2="0.3" y2="1"><stop offset="0" stop-color="#A8CCFA"/><stop offset="1" stop-color="#3C7CE8"/></linearGradient></defs><path d="M0.5,12.5 V1.5 H5.5 L7,3 H13.5 V12.5 Z" fill="#F0F2F8" stroke="#9AAAC8"/><path d="M1,13 L3.5,5.5 H16.5 L14,13 Z" fill="url(#fl)" stroke="#4A7AD0" stroke-width="0.8"/></svg>
<svg class="a" style="left:51px;top:181px;" width="12" height="14" viewBox="0 0 12 14"><path d="M0.5,0.5 H8 L11.5,4 V13.5 H0.5 Z" fill="#F8F8FC" stroke="#8E7E58"/><path d="M8,0.5 V4 H11.5" fill="#E8D8A8" stroke="#8E7E58"/><path d="M2.5,5.5 H9.5 M2.5,7.5 H9.5 M2.5,9.5 H9.5 M2.5,11.5 H8" stroke="#6A8AC8"/></svg>
<div class="t" style="left:69px;top:184px;font-size:11px;line-height:11px;letter-spacing:0.113px">.project</div>
<svg class="a" style="left:49px;top:197px;" width="14" height="16" viewBox="0 0 14 16"><rect x="0.5" y="0.5" width="13" height="15" fill="#fff" stroke="#A8A8A8"/><path d="M2.5,2.5 V7.5 H4.5 L5.5,6.5 V3.5 L4.5,2.5 Z M11.5,2.5 H8.5 L7.5,3.5 V6.5 L8.5,7.5 H11.5 M4,9.5 H10 M7,9.5 V14" stroke="#4A0A38" stroke-width="1.1" fill="none"/></svg>
<div class="t" style="left:69px;top:201px;font-size:11px;line-height:11px;letter-spacing:-0.203px">MyDCT.css-dct</div>
<svg class="a" style="left:49px;top:214px;" width="14" height="16" viewBox="0 0 14 16"><rect x="0.5" y="0.5" width="13" height="15" fill="#fff" stroke="#A8A8A8"/><path d="M2.5,2.5 V7.5 H4.5 L5.5,6.5 V3.5 L4.5,2.5 Z M11.5,2.5 H8.5 L7.5,3.5 V6.5 L8.5,7.5 H11.5 M4,9.5 H10 M7,9.5 V14" stroke="#4A0A38" stroke-width="1.1" fill="none"/></svg>
<div class="t" style="left:69px;top:218px;font-size:11px;line-height:11px;letter-spacing:-0.376px">SimpleDemo.css-dct</div>
<svg class="a" style="left:51px;top:232px;" width="12" height="14" viewBox="0 0 12 14"><path d="M0.5,0.5 H8 L11.5,4 V13.5 H0.5 Z" fill="#F8F8FC" stroke="#8E7E58"/><path d="M8,0.5 V4 H11.5" fill="#E8D8A8" stroke="#8E7E58"/><path d="M2.5,5.5 H9.5 M2.5,7.5 H9.5 M2.5,9.5 H9.5 M2.5,11.5 H8" stroke="#6A8AC8"/></svg>
<div class="t" style="left:69px;top:235px;font-size:11px;line-height:11px;letter-spacing:0.127px">test.dbd</div>
<svg class="a" style="left:14px;top:252px;" width="9" height="9" viewBox="0 0 9 9"><defs><linearGradient id="eb14252" x1="0" y1="0" x2="0" y2="1"><stop offset="0" stop-color="#fff"/><stop offset="1" stop-color="#C8C4B0"/></linearGradient></defs><rect x="0.5" y="0.5" width="8" height="8" rx="1" fill="url(#eb14252)" stroke="#7A98AE"/><path d="M2,4.5 H7" stroke="#000"/><path d="M4.5,2 V7" stroke="#000"/></svg>
<svg class="a" style="left:29px;top:249px;" width="17" height="14" viewBox="0 0 17 14"><defs><linearGradient id="fl" x1="0" y1="0" x2="0.3" y2="1"><stop offset="0" stop-color="#A8CCFA"/><stop offset="1" stop-color="#3C7CE8"/></linearGradient></defs><path d="M0.5,12.5 V1.5 H5.5 L7,3 H13.5 V12.5 Z" fill="#F0F2F8" stroke="#9AAAC8"/><path d="M1,13 L3.5,5.5 H16.5 L14,13 Z" fill="url(#fl)" stroke="#4A7AD0" stroke-width="0.8"/></svg>
<div class="t" style="left:50px;top:252px;font-size:11px;line-height:11px;letter-spacing:-1.442px">SDS</div>
<svg class="a" style="left:14px;top:269px;" width="9" height="9" viewBox="0 0 9 9"><defs><linearGradient id="eb14269" x1="0" y1="0" x2="0" y2="1"><stop offset="0" stop-color="#fff"/><stop offset="1" stop-color="#C8C4B0"/></linearGradient></defs><rect x="0.5" y="0.5" width="8" height="8" rx="1" fill="url(#eb14269)" stroke="#7A98AE"/><path d="M2,4.5 H7" stroke="#000"/><path d="M4.5,2 V7" stroke="#000"/></svg>
<svg class="a" style="left:29px;top:266px;" width="17" height="14" viewBox="0 0 17 14"><defs><linearGradient id="fl" x1="0" y1="0" x2="0.3" y2="1"><stop offset="0" stop-color="#A8CCFA"/><stop offset="1" stop-color="#3C7CE8"/></linearGradient></defs><path d="M0.5,12.5 V1.5 H5.5 L7,3 H13.5 V12.5 Z" fill="#F0F2F8" stroke="#9AAAC8"/><path d="M1,13 L3.5,5.5 H16.5 L14,13 Z" fill="url(#fl)" stroke="#4A7AD0" stroke-width="0.8"/></svg>
<div class="t" style="left:50px;top:269px;font-size:11px;line-height:11px;letter-spacing:-0.562px">SDS Cursors</div>
<svg class="a" style="left:14px;top:286px;" width="9" height="9" viewBox="0 0 9 9"><defs><linearGradient id="eb14286" x1="0" y1="0" x2="0" y2="1"><stop offset="0" stop-color="#fff"/><stop offset="1" stop-color="#C8C4B0"/></linearGradient></defs><rect x="0.5" y="0.5" width="8" height="8" rx="1" fill="url(#eb14286)" stroke="#7A98AE"/><path d="M2,4.5 H7" stroke="#000"/><path d="M4.5,2 V7" stroke="#000"/></svg>
<svg class="a" style="left:29px;top:283px;" width="17" height="14" viewBox="0 0 17 14"><defs><linearGradient id="fl" x1="0" y1="0" x2="0.3" y2="1"><stop offset="0" stop-color="#A8CCFA"/><stop offset="1" stop-color="#3C7CE8"/></linearGradient></defs><path d="M0.5,12.5 V1.5 H5.5 L7,3 H13.5 V12.5 Z" fill="#F0F2F8" stroke="#9AAAC8"/><path d="M1,13 L3.5,5.5 H16.5 L14,13 Z" fill="url(#fl)" stroke="#4A7AD0" stroke-width="0.8"/></svg>
<div class="t" style="left:50px;top:286px;font-size:11px;line-height:11px;letter-spacing:-0.521px">SDS Demo Display Minimal</div>
<svg class="a" style="left:14px;top:303px;" width="9" height="9" viewBox="0 0 9 9"><defs><linearGradient id="eb14303" x1="0" y1="0" x2="0" y2="1"><stop offset="0" stop-color="#fff"/><stop offset="1" stop-color="#C8C4B0"/></linearGradient></defs><rect x="0.5" y="0.5" width="8" height="8" rx="1" fill="url(#eb14303)" stroke="#7A98AE"/><path d="M2,4.5 H7" stroke="#000"/><path d="M4.5,2 V7" stroke="#000"/></svg>
<svg class="a" style="left:29px;top:300px;" width="17" height="14" viewBox="0 0 17 14"><defs><linearGradient id="fl" x1="0" y1="0" x2="0.3" y2="1"><stop offset="0" stop-color="#A8CCFA"/><stop offset="1" stop-color="#3C7CE8"/></linearGradient></defs><path d="M0.5,12.5 V1.5 H5.5 L7,3 H13.5 V12.5 Z" fill="#F0F2F8" stroke="#9AAAC8"/><path d="M1,13 L3.5,5.5 H16.5 L14,13 Z" fill="url(#fl)" stroke="#4A7AD0" stroke-width="0.8"/></svg>
<div class="t" style="left:50px;top:303px;font-size:11px;line-height:11px;letter-spacing:-0.500px">SDS Script Rules</div>
<div class="a" style="left:234px;top:113px;width:506px;height:478px;border:1px solid #ACA899;border-radius:3px 3px 0 0"></div>
<div class="a" style="left:235px;top:114px;width:76px;height:22px;border-radius:3px 0 0 0;background:linear-gradient(#FFFFFF 0%,#F8F7F2 40%,#ECE9D8 100%)"></div>
<div class="a" style="left:311px;top:114px;width:428px;height:23px;border-left:1px solid #ACA899;border-bottom:1px solid #ACA899"></div>
<svg class="a" style="left:239px;top:118px;" width="16" height="16" viewBox="0 0 16 16"><defs><radialGradient id="mg234" cx="0.4" cy="0.35" r="0.7"><stop offset="0" stop-color="#FFFFFF"/><stop offset="1" stop-color="#A8B4C8"/></radialGradient></defs><circle cx="5.5" cy="5.5" r="4.8" fill="url(#mg234)" stroke="#B8A878" stroke-width="1"/><path d="M9,9 L13.5,13.5" stroke="#8A5040" stroke-width="2.2" stroke-linecap="round"/></svg>
<div class="t" style="left:258px;top:121px;font-size:11px;line-height:11px;letter-spacing:-0.375px">Probe</div>
<svg class="a" style="left:294px;top:120px;" width="12" height="12" viewBox="0 0 12 12"><path d="M0.5,2.5 L2.5,0.5 L5.5,3.5 L8.5,0.5 L10.5,2.5 L7.5,5.5 L10.5,8.5 L8.5,10.5 L5.5,7.5 L2.5,10.5 L0.5,8.5 L3.5,5.5 Z" fill="#F8F8F4" stroke="#7E7A6A" stroke-width="1.1" stroke-linejoin="round"/></svg>
<div class="a" style="left:705px;top:118px;width:10px;height:4px;border:1px solid #716F64;background:#fff"></div>
<div class="a" style="left:723px;top:118px;width:10px;height:10px;border:1px solid #716F64;background:#fff"></div>
<div class="a" style="left:724px;top:120px;width:8px;height:1px;background:#716F64"></div>
<div class="t" style="left:242px;top:151px;font-size:11px;line-height:11px;letter-spacing:-0.720px">PV Name:</div>
<div class="a" style="left:293px;top:145px;width:402px;height:21px;border:1px solid #7F9DB9;background:#fff"></div>
<div class="t" style="left:299px;top:151px;font-size:11px;line-height:11px;letter-spacing:-0.504px">SawCalc0</div>
<div class="a" style="left:678px;top:147px;width:15px;height:17px;border-radius:2px;background:linear-gradient(135deg,#C8D6FA 0%,#B6CCFB 50%,#A8C2F8 100%)"></div>
<svg class="a" style="left:681px;top:153px;" width="9" height="6" viewBox="0 0 9 6"><path d="M1,1 L4.5,4.5 L8,1" stroke="#4D6185" stroke-width="2" fill="none"/></svg>
<div class="a" style="left:701px;top:145px;width:30px;height:21px;border:1px solid #003C74;border-radius:3px;background:linear-gradient(#FFFFFF 0%,#F4F3EE 60%,#E6E3D6 100%)"></div>
<div class="t" style="left:706px;top:151px;font-size:11px;line-height:11px;letter-spacing:0.281px">Info</div>
<svg class="a" style="left:237px;top:172px" width="500" height="311" viewBox="0 0 500 311"><rect x="0" y="0" width="500" height="311" fill="#fff"/><path d="M79.25,137.75 A220.17,268.50 0 0 1 122.75,88.46 L167.50,165.98 A143.59,173.00 0 0 0 139.01,197.51 Z" fill="#FF0000" shape-rendering="crispEdges"/><path d="M122.75,88.46 A220.17,268.50 0 0 1 138.80,75.91 L177.96,158.00 A143.59,173.00 0 0 0 167.50,165.98 Z" fill="#C8C800" shape-rendering="crispEdges"/><path d="M138.80,75.91 A220.17,268.50 0 0 1 306.52,48.66 L286.27,140.77 A143.59,173.00 0 0 0 177.96,158.00 Z" fill="#00C800" shape-rendering="crispEdges"/><path d="M306.52,48.66 A220.17,268.50 0 0 1 324.30,55.47 L297.76,145.07 A143.59,173.00 0 0 0 286.27,140.77 Z" fill="#C8C800" shape-rendering="crispEdges"/><path d="M324.30,55.47 A220.17,268.50 0 0 1 419.75,137.75 L359.99,197.51 A143.59,173.00 0 0 0 297.76,145.07 Z" fill="#FF0000" shape-rendering="crispEdges"/><line x1="72" y1="127" x2="184" y2="242.5" stroke="#000" stroke-width="1"/><line x1="151" y1="52.5" x2="213.7" y2="214.8" stroke="#000" stroke-width="1"/><line x1="249.5" y1="26" x2="249.5" y2="205.7" stroke="#000" stroke-width="1"/><line x1="348" y1="52.5" x2="285.3" y2="214.8" stroke="#000" stroke-width="1"/><line x1="427" y1="127" x2="315" y2="242.5" stroke="#000" stroke-width="1"/><path d="M79.25,137.75 A220.17,268.50 0 0 1 419.75,137.75 L359.99,197.51 A143.59,173.00 0 0 0 139.01,197.51 Z" fill="none" stroke="#140A0A" stroke-width="5" stroke-linejoin="miter"/><text x="71.6" y="126" font-family="Liberation Sans" font-size="11" text-anchor="middle" fill="#000">0</text><text x="150.3" y="51" font-family="Liberation Sans" font-size="11" text-anchor="middle" fill="#000">25</text><text x="248.5" y="24" font-family="Liberation Sans" font-size="11" text-anchor="middle" fill="#000">50</text><text x="346" y="51" font-family="Liberation Sans" font-size="11" text-anchor="middle" fill="#000">75</text><text x="424" y="126" font-family="Liberation Sans" font-size="11" text-anchor="middle" fill="#000">100</text><line x1="249.5" y1="310" x2="205.5" y2="92.5" stroke="#1800CC" stroke-width="5" stroke-linecap="round"/><rect x="1.5" y="1.5" width="497" height="308" fill="none" stroke="#140A0A" stroke-width="3"/></svg>
<div class="t" style="left:242px;top:491px;font-size:11px;line-height:11px;letter-spacing:0.164px">Wert:</div>
<div class="a" style="left:307px;top:488px;width:305px;height:15px;border-top:1px solid #ACA899;border-left:1px solid #ACA899;border-right:1px solid #fff;border-bottom:1px solid #fff;background:#ECE9D8"></div>
<div class="t" style="left:308px;top:491px;font-size:11px;line-height:11px;letter-spacing:0.016px">36.0</div>
<div class="a" style="left:617px;top:489px;width:13px;height:13px;border:1px solid #1C5180;background:linear-gradient(135deg,#DCDCD7 0%,#F0F0EA 60%,#FFFFFF 100%)"></div>
<svg class="a" style="left:619px;top:491px;" width="9" height="9" viewBox="0 0 9 9"><path d="M1,4 L3.5,6.5 L8,1.5" stroke="#21A121" stroke-width="2" fill="none" stroke-linecap="square"/></svg>
<div class="t" style="left:633px;top:491px;font-size:11px;line-height:11px;letter-spacing:-0.165px">Meter</div>
<div class="t" style="left:242px;top:516px;font-size:11px;line-height:11px;letter-spacing:-0.186px">Zeitstempel:</div>
<div class="a" style="left:307px;top:513px;width:305px;height:15px;border-top:1px solid #ACA899;border-left:1px solid #ACA899;border-right:1px solid #fff;border-bottom:1px solid #fff;background:#ECE9D8"></div>
<div class="t" style="left:308px;top:516px;font-size:11px;line-height:11px;letter-spacing:0.060px">2010/04/12 13:13:32.839580823</div>
<div class="a" style="left:617px;top:539px;width:13px;height:13px;border:1px solid #CAC8BB;background:#fff"></div>
<div class="t" style="left:633px;top:541px;font-size:11px;line-height:11px;color:#ACA899;letter-spacing:-0.117px">Ändern</div>
<div class="a" style="left:241px;top:561px;width:491px;height:1px;background:#ACA899"></div>
<div class="a" style="left:241px;top:562px;width:491px;height:1px;background:#fff"></div>
<div class="t" style="left:242px;top:571px;font-size:11px;line-height:11px;letter-spacing:-0.054px">Status:</div>
<div class="a" style="left:307px;top:568px;width:425px;height:15px;border-top:1px solid #ACA899;border-left:1px solid #ACA899;border-right:1px solid #fff;border-bottom:1px solid #fff;background:#ECE9D8"></div>
<div class="t" style="left:308px;top:571px;font-size:11px;line-height:11px;letter-spacing:-0.169px">Benachrichtigungsperiode 1,00 Sekunden</div>
<div class="a" style="left:743px;top:113px;width:506px;height:478px;border:1px solid #ACA899;border-radius:3px 3px 0 0"></div>
<div class="a" style="left:744px;top:114px;width:76px;height:22px;border-radius:3px 0 0 0;background:linear-gradient(#FFFFFF 0%,#F8F7F2 40%,#ECE9D8 100%)"></div>
<div class="a" style="left:820px;top:114px;width:428px;height:23px;border-left:1px solid #ACA899;border-bottom:1px solid #ACA899"></div>
<svg class="a" style="left:748px;top:118px;" width="16" height="16" viewBox="0 0 16 16"><defs><radialGradient id="mg743" cx="0.4" cy="0.35" r="0.7"><stop offset="0" stop-color="#FFFFFF"/><stop offset="1" stop-color="#A8B4C8"/></radialGradient></defs><circle cx="5.5" cy="5.5" r="4.8" fill="url(#mg743)" stroke="#B8A878" stroke-width="1"/><path d="M9,9 L13.5,13.5" stroke="#8A5040" stroke-width="2.2" stroke-linecap="round"/></svg>
<div class="t" style="left:767px;top:121px;font-size:11px;line-height:11px;letter-spacing:-0.375px">Probe</div>
<svg class="a" style="left:803px;top:120px;" width="12" height="12" viewBox="0 0 12 12"><path d="M0.5,2.5 L2.5,0.5 L5.5,3.5 L8.5,0.5 L10.5,2.5 L7.5,5.5 L10.5,8.5 L8.5,10.5 L5.5,7.5 L2.5,10.5 L0.5,8.5 L3.5,5.5 Z" fill="#F8F8F4" stroke="#7E7A6A" stroke-width="1.1" stroke-linejoin="round"/></svg>
<div class="a" style="left:1214px;top:118px;width:10px;height:4px;border:1px solid #716F64;background:#fff"></div>
<div class="a" style="left:1232px;top:118px;width:10px;height:10px;border:1px solid #716F64;background:#fff"></div>
<div class="a" style="left:1233px;top:120px;width:8px;height:1px;background:#716F64"></div>
<div class="t" style="left:751px;top:151px;font-size:11px;line-height:11px;letter-spacing:-0.720px">PV Name:</div>
<div class="a" style="left:802px;top:145px;width:402px;height:21px;border:1px solid #7F9DB9;background:#fff"></div>
<div class="t" style="left:808px;top:151px;font-size:11px;line-height:11px;letter-spacing:-0.504px">SawCalc1</div>
<div class="a" style="left:1187px;top:147px;width:15px;height:17px;border-radius:2px;background:linear-gradient(135deg,#C8D6FA 0%,#B6CCFB 50%,#A8C2F8 100%)"></div>
<svg class="a" style="left:1190px;top:153px;" width="9" height="6" viewBox="0 0 9 6"><path d="M1,1 L4.5,4.5 L8,1" stroke="#4D6185" stroke-width="2" fill="none"/></svg>
<div class="a" style="left:1210px;top:145px;width:30px;height:21px;border:1px solid #003C74;border-radius:3px;background:linear-gradient(#FFFFFF 0%,#F4F3EE 60%,#E6E3D6 100%)"></div>
<div class="t" style="left:1215px;top:151px;font-size:11px;line-height:11px;letter-spacing:0.281px">Info</div>
<svg class="a" style="left:746px;top:172px" width="500" height="311" viewBox="0 0 500 311"><rect x="0" y="0" width="500" height="311" fill="#fff"/><path d="M79.25,137.75 A220.17,268.50 0 0 1 122.75,88.46 L167.50,165.98 A143.59,173.00 0 0 0 139.01,197.51 Z" fill="#FF0000" shape-rendering="crispEdges"/><path d="M122.75,88.46 A220.17,268.50 0 0 1 138.80,75.91 L177.96,158.00 A143.59,173.00 0 0 0 167.50,165.98 Z" fill="#C8C800" shape-rendering="crispEdges"/><path d="M138.80,75.91 A220.17,268.50 0 0 1 306.52,48.66 L286.27,140.77 A143.59,173.00 0 0 0 177.96,158.00 Z" fill="#00C800" shape-rendering="crispEdges"/><path d="M306.52,48.66 A220.17,268.50 0 0 1 324.30,55.47 L297.76,145.07 A143.59,173.00 0 0 0 286.27,140.77 Z" fill="#C8C800" shape-rendering="crispEdges"/><path d="M324.30,55.47 A220.17,268.50 0 0 1 419.75,137.75 L359.99,197.51 A143.59,173.00 0 0 0 297.76,145.07 Z" fill="#FF0000" shape-rendering="crispEdges"/><line x1="72" y1="127" x2="184" y2="242.5" stroke="#000" stroke-width="1"/><line x1="151" y1="52.5" x2="213.7" y2="214.8" stroke="#000" stroke-width="1"/><line x1="249.5" y1="26" x2="249.5" y2="205.7" stroke="#000" stroke-width="1"/><line x1="348" y1="52.5" x2="285.3" y2="214.8" stroke="#000" stroke-width="1"/><line x1="427" y1="127" x2="315" y2="242.5" stroke="#000" stroke-width="1"/><path d="M79.25,137.75 A220.17,268.50 0 0 1 419.75,137.75 L359.99,197.51 A143.59,173.00 0 0 0 139.01,197.51 Z" fill="none" stroke="#140A0A" stroke-width="5" stroke-linejoin="miter"/><text x="71.6" y="126" font-family="Liberation Sans" font-size="11" text-anchor="middle" fill="#000">0</text><text x="150.3" y="51" font-family="Liberation Sans" font-size="11" text-anchor="middle" fill="#000">25</text><text x="248.5" y="24" font-family="Liberation Sans" font-size="11" text-anchor="middle" fill="#000">50</text><text x="346" y="51" font-family="Liberation Sans" font-size="11" text-anchor="middle" fill="#000">75</text><text x="424" y="126" font-family="Liberation Sans" font-size="11" text-anchor="middle" fill="#000">100</text><line x1="249.5" y1="310" x2="339.5" y2="116" stroke="#1800CC" stroke-width="5" stroke-linecap="round"/><rect x="1.5" y="1.5" width="497" height="308" fill="none" stroke="#140A0A" stroke-width="3"/></svg>
<div class="t" style="left:751px;top:491px;font-size:11px;line-height:11px;letter-spacing:0.164px">Wert:</div>
<div class="a" style="left:816px;top:488px;width:305px;height:15px;border-top:1px solid #ACA899;border-left:1px solid #ACA899;border-right:1px solid #fff;border-bottom:1px solid #fff;background:#ECE9D8"></div>
<div class="t" style="left:817px;top:491px;font-size:11px;line-height:11px;letter-spacing:-0.195px">80.0 [MAJOR, HIHI_ALARM]</div>
<div class="a" style="left:1126px;top:489px;width:13px;height:13px;border:1px solid #1C5180;background:linear-gradient(135deg,#DCDCD7 0%,#F0F0EA 60%,#FFFFFF 100%)"></div>
<svg class="a" style="left:1128px;top:491px;" width="9" height="9" viewBox="0 0 9 9"><path d="M1,4 L3.5,6.5 L8,1.5" stroke="#21A121" stroke-width="2" fill="none" stroke-linecap="square"/></svg>
<div class="t" style="left:1142px;top:491px;font-size:11px;line-height:11px;letter-spacing:-0.165px">Meter</div>
<div class="t" style="left:751px;top:516px;font-size:11px;line-height:11px;letter-spacing:-0.186px">Zeitstempel:</div>
<div class="a" style="left:816px;top:513px;width:305px;height:15px;border-top:1px solid #ACA899;border-left:1px solid #ACA899;border-right:1px solid #fff;border-bottom:1px solid #fff;background:#ECE9D8"></div>
<div class="t" style="left:817px;top:516px;font-size:11px;line-height:11px;letter-spacing:0.060px">2010/04/12 13:13:32.839589206</div>
<div class="a" style="left:1126px;top:539px;width:13px;height:13px;border:1px solid #CAC8BB;background:#fff"></div>
<div class="t" style="left:1142px;top:541px;font-size:11px;line-height:11px;color:#ACA899;letter-spacing:-0.117px">Ändern</div>
<div class="a" style="left:750px;top:561px;width:491px;height:1px;background:#ACA899"></div>
<div class="a" style="left:750px;top:562px;width:491px;height:1px;background:#fff"></div>
<div class="t" style="left:751px;top:571px;font-size:11px;line-height:11px;letter-spacing:-0.054px">Status:</div>
<div class="a" style="left:816px;top:568px;width:425px;height:15px;border-top:1px solid #ACA899;border-left:1px solid #ACA899;border-right:1px solid #fff;border-bottom:1px solid #fff;background:#ECE9D8"></div>
<div class="t" style="left:817px;top:571px;font-size:11px;line-height:11px;letter-spacing:-0.169px">Benachrichtigungsperiode 1,00 Sekunden</div>
<div class="a" style="left:234px;top:594px;width:1015px;height:370px;border:1px solid #ACA899;border-radius:3px 3px 0 0"></div>
<div class="a" style="left:235px;top:595px;width:143px;height:22px;border-radius:3px 0 0 0;background:linear-gradient(#FFFFFF 0%,#F8F7F2 40%,#ECE9D8 100%)"></div>
<div class="a" style="left:378px;top:595px;width:870px;height:23px;border-left:1px solid #ACA899;border-bottom:1px solid #ACA899"></div>
<svg class="a" style="left:238px;top:598px;" width="16" height="16" viewBox="0 0 16 16"><rect x="0" y="0" width="16" height="16" fill="#F8F0F8"/><rect x="1" y="1" width="3" height="3" fill="#D82020"/><path d="M2.5,3 V11.5 H6" stroke="#202020" stroke-width="1.2" fill="none"/><path d="M1,5.5 H5" stroke="#202020"/><rect x="5" y="5" width="3" height="3" fill="#F0D800"/><rect x="5" y="10" width="3" height="3" fill="#D82020"/></svg>
<div class="t" style="left:257px;top:602px;font-size:11px;line-height:11px;letter-spacing:-0.483px">EPICS PV Hierarchie</div>
<svg class="a" style="left:361px;top:601px;" width="12" height="12" viewBox="0 0 12 12"><path d="M0.5,2.5 L2.5,0.5 L5.5,3.5 L8.5,0.5 L10.5,2.5 L7.5,5.5 L10.5,8.5 L8.5,10.5 L5.5,7.5 L2.5,10.5 L0.5,8.5 L3.5,5.5 Z" fill="#F8F8F4" stroke="#7E7A6A" stroke-width="1.1" stroke-linejoin="round"/></svg>
<div class="a" style="left:1214px;top:599px;width:10px;height:4px;border:1px solid #716F64;background:#fff"></div>
<div class="a" style="left:1232px;top:599px;width:10px;height:10px;border:1px solid #716F64;background:#fff"></div>
<div class="a" style="left:1233px;top:601px;width:8px;height:1px;background:#716F64"></div>
<div class="t" style="left:242px;top:630px;font-size:11px;line-height:11px;letter-spacing:-0.881px">PV:</div>
<div class="a" style="left:263px;top:625px;width:978px;height:21px;border:1px solid #7F9DB9;background:#fff"></div>
<div class="t" style="left:269px;top:631px;font-size:11px;line-height:11px;letter-spacing:-0.654px">SawCalc1</div>
<div class="a" style="left:1224px;top:627px;width:15px;height:17px;border-radius:2px;background:linear-gradient(135deg,#C8D6FA 0%,#B6CCFB 50%,#A8C2F8 100%)"></div>
<svg class="a" style="left:1227px;top:633px;" width="9" height="6" viewBox="0 0 9 6"><path d="M1,1 L4.5,4.5 L8,1" stroke="#4D6185" stroke-width="2" fill="none"/></svg>
<div class="a" style="left:242px;top:651px;width:999px;height:305px;background:#fff"></div>
<div class="a" style="left:273px;top:664px;width:1px;height:124px;background-image:linear-gradient(#B4B09C 1px,transparent 1px);background-size:1px 2px"></div>
<div class="a" style="left:292px;top:680px;width:1px;height:60px;background-image:linear-gradient(#B4B09C 1px,transparent 1px);background-size:1px 2px"></div>
<div class="a" style="left:248px;top:659px;width:2px;height:1px;background-image:linear-gradient(90deg,#B4B09C 1px,transparent 1px);background-size:2px 1px"></div>
<div class="a" style="left:278px;top:675px;width:5px;height:1px;background-image:linear-gradient(90deg,#B4B09C 1px,transparent 1px);background-size:2px 1px"></div>
<div class="a" style="left:293px;top:691px;width:9px;height:1px;background-image:linear-gradient(90deg,#B4B09C 1px,transparent 1px);background-size:2px 1px"></div>
<div class="a" style="left:293px;top:707px;width:9px;height:1px;background-image:linear-gradient(90deg,#B4B09C 1px,transparent 1px);background-size:2px 1px"></div>
<div class="a" style="left:293px;top:723px;width:9px;height:1px;background-image:linear-gradient(90deg,#B4B09C 1px,transparent 1px);background-size:2px 1px"></div>
<div class="a" style="left:293px;top:739px;width:9px;height:1px;background-image:linear-gradient(90deg,#B4B09C 1px,transparent 1px);background-size:2px 1px"></div>
<div class="a" style="left:274px;top:755px;width:9px;height:1px;background-image:linear-gradient(90deg,#B4B09C 1px,transparent 1px);background-size:2px 1px"></div>
<div class="a" style="left:274px;top:771px;width:9px;height:1px;background-image:linear-gradient(90deg,#B4B09C 1px,transparent 1px);background-size:2px 1px"></div>
<div class="a" style="left:274px;top:787px;width:9px;height:1px;background-image:linear-gradient(90deg,#B4B09C 1px,transparent 1px);background-size:2px 1px"></div>
<div class="t" style="left:266px;top:654px;font-size:11px;line-height:11px;color:#FF0000;letter-spacing:-0.212px">PV 'SawCalc1'  (calc)  =  80.0 [MAJOR, HIHI_ALARM]</div>
<div class="t" style="left:284px;top:670px;font-size:11px;line-height:11px;color:#FF0000;letter-spacing:-0.169px">INPA 'SawCalc1.VAL'  (calc)  =  80.0 [MAJOR, HIHI_ALARM]</div>
<div class="t" style="left:304px;top:686px;font-size:11px;line-height:11px;color:#FF0000;letter-spacing:-0.174px">INPA 'SawCalc1.VAL'  (calc)  =  80.0 [MAJOR, HIHI_ALARM]</div>
<div class="t" style="left:304px;top:702px;font-size:11px;line-height:11px;letter-spacing:-0.354px">INPB '10'</div>
<div class="t" style="left:304px;top:718px;font-size:11px;line-height:11px;letter-spacing:-0.420px">INPC '10'</div>
<div class="t" style="left:304px;top:734px;font-size:11px;line-height:11px;letter-spacing:-0.309px">INPD '75'</div>
<div class="t" style="left:284px;top:750px;font-size:11px;line-height:11px;letter-spacing:-0.399px">INPB '10'</div>
<div class="t" style="left:284px;top:766px;font-size:11px;line-height:11px;letter-spacing:-0.465px">INPC '10'</div>
<div class="t" style="left:284px;top:782px;font-size:11px;line-height:11px;letter-spacing:-0.353px">INPD '75'</div>
<svg class="a" style="left:250px;top:655px;" width="9" height="9" viewBox="0 0 9 9"><defs><linearGradient id="eb250655" x1="0" y1="0" x2="0" y2="1"><stop offset="0" stop-color="#fff"/><stop offset="1" stop-color="#C8C4B0"/></linearGradient></defs><rect x="0.5" y="0.5" width="8" height="8" rx="1" fill="url(#eb250655)" stroke="#7A98AE"/><path d="M2,4.5 H7" stroke="#000"/></svg>
<svg class="a" style="left:269px;top:671px;" width="9" height="9" viewBox="0 0 9 9"><defs><linearGradient id="eb269671" x1="0" y1="0" x2="0" y2="1"><stop offset="0" stop-color="#fff"/><stop offset="1" stop-color="#C8C4B0"/></linearGradient></defs><rect x="0.5" y="0.5" width="8" height="8" rx="1" fill="url(#eb269671)" stroke="#7A98AE"/><path d="M2,4.5 H7" stroke="#000"/></svg>
<div class="a" style="left:1251px;top:115px;width:27px;height:67px;border:1px solid #CFCBBB;border-radius:3px 3px 7px 7px;box-shadow:inset 0 0 0 1px #fff"></div>
<svg class="a" style="left:1258px;top:122px;" width="2" height="2" viewBox="0 0 2 2"><rect x="0" y="0" width="1" height="1" fill="#8A8676"/><rect x="1" y="1" width="1" height="1" fill="#fff"/><rect x="1" y="0" width="1" height="1" fill="#f4f2ea"/><rect x="0" y="1" width="1" height="1" fill="#f4f2ea"/></svg>
<svg class="a" style="left:1262px;top:122px;" width="2" height="2" viewBox="0 0 2 2"><rect x="0" y="0" width="1" height="1" fill="#8A8676"/><rect x="1" y="1" width="1" height="1" fill="#fff"/><rect x="1" y="0" width="1" height="1" fill="#f4f2ea"/><rect x="0" y="1" width="1" height="1" fill="#f4f2ea"/></svg>
<svg class="a" style="left:1266px;top:122px;" width="2" height="2" viewBox="0 0 2 2"><rect x="0" y="0" width="1" height="1" fill="#8A8676"/><rect x="1" y="1" width="1" height="1" fill="#fff"/><rect x="1" y="0" width="1" height="1" fill="#f4f2ea"/><rect x="0" y="1" width="1" height="1" fill="#f4f2ea"/></svg>
<svg class="a" style="left:1270px;top:122px;" width="2" height="2" viewBox="0 0 2 2"><rect x="0" y="0" width="1" height="1" fill="#8A8676"/><rect x="1" y="1" width="1" height="1" fill="#fff"/><rect x="1" y="0" width="1" height="1" fill="#f4f2ea"/><rect x="0" y="1" width="1" height="1" fill="#f4f2ea"/></svg>
<svg class="a" style="left:1260px;top:136px;" width="9" height="9" viewBox="0 0 9 9"><rect x="3" y="0" width="6" height="5" fill="#fff" stroke="#716F64" stroke-width="0"/><path d="M3.5,2.5 V0.5 H8.5 V4.5 H6.5" stroke="#716F64" fill="none"/><rect x="0.5" y="3.5" width="6" height="5" fill="#fff" stroke="#716F64"/><rect x="3" y="0" width="6" height="2" fill="#716F64"/><rect x="0" y="3" width="7" height="2" fill="#716F64"/></svg>
<svg class="a" style="left:1256px;top:154px;" width="17" height="17" viewBox="0 0 17 17"><rect x="0.5" y="3.5" width="14" height="12" fill="#EEF8FF" stroke="#9C8450"/><rect x="0" y="3" width="15" height="2" fill="#3A7CD0"/><path d="M6,12 L14,3" stroke="#C08830" stroke-width="3"/><path d="M6,12 L14,3" stroke="#F8D890" stroke-width="1.4"/><path d="M4.5,13.5 L6.5,11" stroke="#102060" stroke-width="2"/><circle cx="14.5" cy="2.5" r="1.6" fill="#E07070"/></svg>
<svg class="a" style="left:6px;top:970px;" width="3" height="16" viewBox="0 0 3 16"><rect x="0" y="0" width="2" height="2" fill="#A29E8C"/><rect x="2" y="0" width="1" height="3" fill="#fff"/><rect x="0" y="2" width="3" height="1" fill="#fff"/><rect x="0" y="4" width="2" height="2" fill="#A29E8C"/><rect x="2" y="4" width="1" height="3" fill="#fff"/><rect x="0" y="6" width="3" height="1" fill="#fff"/><rect x="0" y="8" width="2" height="2" fill="#A29E8C"/><rect x="2" y="8" width="1" height="3" fill="#fff"/><rect x="0" y="10" width="3" height="1" fill="#fff"/><rect x="0" y="12" width="2" height="2" fill="#A29E8C"/><rect x="2" y="12" width="1" height="3" fill="#fff"/><rect x="0" y="14" width="3" height="1" fill="#fff"/></svg>
<svg class="a" style="left:18px;top:970px;" width="16" height="16" viewBox="0 0 16 16"><rect x="0.5" y="2.5" width="6" height="12" fill="#F0F6FC" stroke="#6A7A8A"/><rect x="1" y="3" width="5" height="2" fill="#3A7CD0"/><path d="M11,0 L13.5,2.5 L11,5 L8.5,2.5 Z" fill="#C9A030"/><path d="M11,1 V4 M9.5,2.5 H12.5" stroke="#FFF0B0"/></svg>
<div class="t" style="left:78px;top:974px;font-size:11px;line-height:11px;letter-spacing:-0.387px">DCT Demo Project Minimal</div>
<svg class="a" style="left:869px;top:970px;" width="3" height="16" viewBox="0 0 3 16"><rect x="0" y="0" width="2" height="2" fill="#A29E8C"/><rect x="2" y="0" width="1" height="3" fill="#fff"/><rect x="0" y="2" width="3" height="1" fill="#fff"/><rect x="0" y="4" width="2" height="2" fill="#A29E8C"/><rect x="2" y="4" width="1" height="3" fill="#fff"/><rect x="0" y="6" width="3" height="1" fill="#fff"/><rect x="0" y="8" width="2" height="2" fill="#A29E8C"/><rect x="2" y="8" width="1" height="3" fill="#fff"/><rect x="0" y="10" width="3" height="1" fill="#fff"/><rect x="0" y="12" width="2" height="2" fill="#A29E8C"/><rect x="2" y="12" width="1" height="3" fill="#fff"/><rect x="0" y="14" width="3" height="1" fill="#fff"/></svg>
<svg class="a" style="left:1128px;top:970px;" width="3" height="16" viewBox="0 0 3 16"><rect x="0" y="0" width="2" height="2" fill="#A29E8C"/><rect x="2" y="0" width="1" height="3" fill="#fff"/><rect x="0" y="2" width="3" height="1" fill="#fff"/><rect x="0" y="4" width="2" height="2" fill="#A29E8C"/><rect x="2" y="4" width="1" height="3" fill="#fff"/><rect x="0" y="6" width="3" height="1" fill="#fff"/><rect x="0" y="8" width="2" height="2" fill="#A29E8C"/><rect x="2" y="8" width="1" height="3" fill="#fff"/><rect x="0" y="10" width="3" height="1" fill="#fff"/><rect x="0" y="12" width="2" height="2" fill="#A29E8C"/><rect x="2" y="12" width="1" height="3" fill="#fff"/><rect x="0" y="14" width="3" height="1" fill="#fff"/></svg>
<div class="t" style="left:1141px;top:973px;font-size:11px;line-height:11px;letter-spacing:-0.198px">Not logged in</div>
<div class="a" style="left:1211px;top:966px;width:69px;height:26px;border:1px solid #D8D4C4;border-radius:3px 9px 9px 3px;box-shadow:inset 0 0 0 1px #fff"></div>
<svg class="a" style="left:1217px;top:971px;" width="3" height="16" viewBox="0 0 3 16"><rect x="0" y="0" width="2" height="2" fill="#A29E8C"/><rect x="2" y="0" width="1" height="3" fill="#fff"/><rect x="0" y="2" width="3" height="1" fill="#fff"/><rect x="0" y="4" width="2" height="2" fill="#A29E8C"/><rect x="2" y="4" width="1" height="3" fill="#fff"/><rect x="0" y="6" width="3" height="1" fill="#fff"/><rect x="0" y="8" width="2" height="2" fill="#A29E8C"/><rect x="2" y="8" width="1" height="3" fill="#fff"/><rect x="0" y="10" width="3" height="1" fill="#fff"/><rect x="0" y="12" width="2" height="2" fill="#A29E8C"/><rect x="2" y="12" width="1" height="3" fill="#fff"/><rect x="0" y="14" width="3" height="1" fill="#fff"/></svg>
<svg class="a" style="left:1232px;top:975px;" width="9" height="9" viewBox="0 0 9 9"><rect x="3" y="0" width="6" height="5" fill="#fff" stroke="#716F64" stroke-width="0"/><path d="M3.5,2.5 V0.5 H8.5 V4.5 H6.5" stroke="#716F64" fill="none"/><rect x="0.5" y="3.5" width="6" height="5" fill="#fff" stroke="#716F64"/><rect x="3" y="0" width="6" height="2" fill="#716F64"/><rect x="0" y="3" width="7" height="2" fill="#716F64"/></svg>
<svg class="a" style="left:1252px;top:971px;" width="16" height="16" viewBox="0 0 16 16"><rect x="1" y="1" width="13" height="10" fill="#2A5CB8"/><rect x="2.5" y="2.5" width="10" height="7" fill="#E8F4FF"/><path d="M4,4.5 H9 M4,6.5 H11" stroke="#2A4A98"/><rect x="6" y="11" width="3" height="2" fill="#2A5CB8"/><rect x="2" y="13" width="11" height="2" fill="#2A5CB8"/></svg>
</div></body></html>
